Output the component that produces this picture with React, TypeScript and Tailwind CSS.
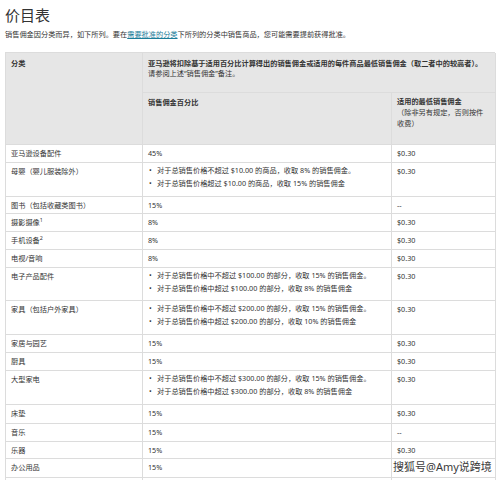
type Row = {
  name: React.ReactNode;
  rate?: string;
  bullets?: string[];
  min: string;
  h: string;
};

const rows: Row[] = [
  { name: '亚马逊设备配件', rate: '45%', min: '$0.30', h: 'h-[18px]' },
  {
    name: '母婴（婴儿服装除外）',
    bullets: [
      '对于总销售价格不超过 $10.00 的商品，收取 8% 的销售佣金。',
      '对于总销售价格超过 $10.00 的商品，收取 15% 的销售佣金',
    ],
    min: '$0.30',
    h: 'h-[34px]',
  },
  { name: '图书（包括收藏类图书）', rate: '15%', min: '--', h: 'h-[17px]' },
  { name: <>摄影摄像<sup>1</sup></>, rate: '8%', min: '$0.30', h: 'h-[18px]' },
  { name: <>手机设备<sup>2</sup></>, rate: '8%', min: '$0.30', h: 'h-[18px]' },
  { name: '电视/音响', rate: '8%', min: '$0.30', h: 'h-[18px]' },
  {
    name: '电子产品配件',
    bullets: [
      '对于总销售价格中不超过 $100.00 的部分，收取 15% 的销售佣金。',
      '对于总销售价格中超过 $100.00 的部分，收取 8% 的销售佣金',
    ],
    min: '$0.30',
    h: 'h-[33px]',
  },
  {
    name: '家具（包括户外家具）',
    bullets: [
      '对于总销售价格中不超过 $200.00 的部分，收取 15% 的销售佣金。',
      '对于总销售价格中超过 $200.00 的部分，收取 10% 的销售佣金',
    ],
    min: '$0.30',
    h: 'h-[34px]',
  },
  { name: '家居与园艺', rate: '15%', min: '$0.30', h: 'h-[18px]' },
  { name: '厨具', rate: '15%', min: '$0.30', h: 'h-[18px]' },
  {
    name: '大型家电',
    bullets: [
      '对于总销售价格中不超过 $300.00 的部分，收取 15% 的销售佣金。',
      '对于总销售价格中超过 $300.00 的部分，收取 8% 的销售佣金',
    ],
    min: '$0.30',
    h: 'h-[34px]',
  },
  { name: '床垫', rate: '15%', min: '$0.30', h: 'h-[19px]' },
  { name: '音乐', rate: '15%', min: '--', h: 'h-[18px]' },
  { name: '乐器', rate: '15%', min: '$0.30', h: 'h-[17px]' },
  { name: '办公用品', rate: '15%', min: '', h: 'h-[19px]' },
  { name: '', rate: '', min: '', h: 'h-[18px]' },
];

const cell = 'border-r border-b border-[#dcdcdc] px-[5px]';

export default function App() {
  return (
    <div className="relative w-[500px] h-[480px] overflow-hidden bg-white text-[#333] font-['Noto_Sans','Noto_Sans_CJK_SC',sans-serif]">
      <h1 className="pl-[5px] pt-[6px] text-[15px] leading-[18px] font-normal text-[#333]">价目表</h1>
      <p className="pl-[5px] mt-[5px] text-[7.2px] leading-[10px] text-[#333] whitespace-nowrap">
        销售佣金因分类而异，如下所列。要在
        <span className="text-[#1b7e9a] underline">需要批准的分类</span>
        下所列的分类中销售商品，您可能需要提前获得批准。
      </p>

      <div className="ml-[5px] mt-[13px] w-[490px] border-l border-t border-[#dcdcdc] text-[7.2px] leading-[10px]">
        {/* header */}
        <div className="grid grid-cols-[137px_249px_104px] grid-rows-[40px_52px] bg-[#e6e6e6]">
          <div className={`${cell} row-span-2 border-[#d4d4d4] px-[4px] pt-[5px] font-bold`}>分类</div>
          <div className={`${cell} col-span-2 border-[#d4d4d4] pt-[5px] whitespace-nowrap`}>
            <div className="font-bold">亚马逊将扣除基于适用百分比计算得出的销售佣金或适用的每件商品最低销售佣金（取二者中的较高者）。</div>
            <div>请参阅上述“销售佣金”备注。</div>
          </div>
          <div className={`${cell} border-[#d4d4d4] pt-[4px] font-bold`}>销售佣金百分比</div>
          <div className={`${cell} border-[#d4d4d4] pt-[3px] leading-[11px]`}>
            <div className="font-bold">适用的最低销售佣金</div>
            <div>（除非另有规定，否则按件收费）</div>
          </div>
        </div>

        {rows.map((r, i) => (
          <div key={i} className={`grid grid-cols-[137px_249px_104px] ${r.h}`}>
            <div className={`${cell} px-[4px] pt-[3px] whitespace-nowrap`}>{r.name}</div>
            <div className={`${cell} ${r.bullets ? 'pt-[1px]' : 'pt-[3px]'}`}>
              {r.bullets ? (
                <ul className="leading-[13px]">
                  {r.bullets.map((b) => (
                    <li key={b} className="flex whitespace-nowrap">
                      <span className="w-[9px] shrink-0 pl-[1px]">•</span>
                      <span>{b}</span>
                    </li>
                  ))}
                </ul>
              ) : (
                r.rate
              )}
            </div>
            <div className={`${cell} pt-[3px]`}>{r.min}</div>
          </div>
        ))}
      </div>

      {/* watermark */}
      <div className="absolute left-[393px] top-[459px] text-[11px] leading-[16px] text-[#3a3a3a] whitespace-nowrap [text-shadow:0_0_2px_#fff]">
        搜狐号@Amy说跨境
      </div>
    </div>
  );
}
